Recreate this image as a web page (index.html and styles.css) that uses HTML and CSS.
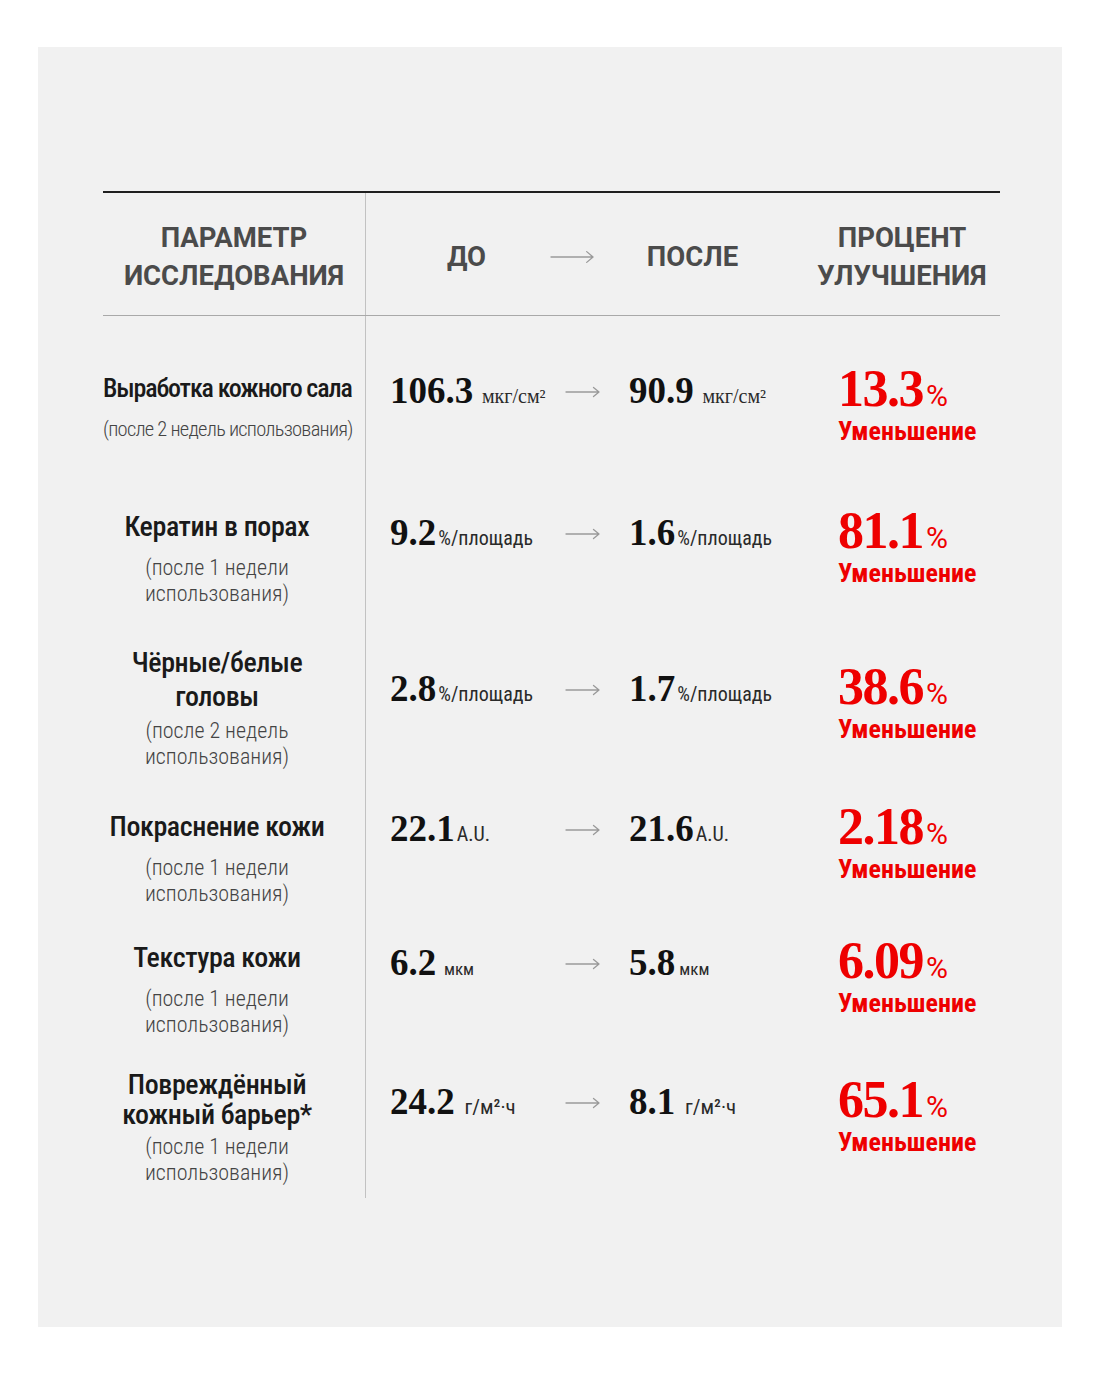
FILE: index.html
```html
<!DOCTYPE html>
<html lang="ru">
<head>
<meta charset="utf-8">
<title>Результаты исследования</title>
<link rel="stylesheet" href="styles.css">
</head>
<body>
<div class="panel">
  <div class="table">
    <div class="head">
      <div class="h h-param">ПАРАМЕТР<br>ИССЛЕДОВАНИЯ</div>
      <div class="h h-before">ДО</div>
      <div class="h h-arrow"><svg class="arrow-lg" viewBox="0 0 46 14" width="46" height="14"><path d="M1 7H44M37.5 1.5L44 7L37.5 12.5" /></svg></div>
      <div class="h h-after">ПОСЛЕ</div>
      <div class="h h-pct">ПРОЦЕНТ<br>УЛУЧШЕНИЯ</div>
    </div>

    <div class="row r1">
      <div class="param"><div class="title">Выработка кожного сала</div><div class="sub">(после 2 недель использования)</div></div>
      <div class="val"><span class="num">106.3</span> <span class="unit serif">мкг/см²</span></div>
      <div class="arr"><svg class="arrow" viewBox="0 0 36 12" width="36" height="12"><path d="M1 6H34M28.5 1.5L34 6L28.5 10.5" /></svg></div>
      <div class="val after"><span class="num">90.9</span> <span class="unit serif">мкг/см²</span></div>
      <div class="pct"><div class="pnum">13.3<span class="psign">%</span></div><div class="plabel">Уменьшение</div></div>
    </div>

    <div class="row r2">
      <div class="param"><div class="title">Кератин в порах</div><div class="sub">(после 1 недели<br>использования)</div></div>
      <div class="val"><span class="num">9.2</span><span class="unit">%/площадь</span></div>
      <div class="arr"><svg class="arrow" viewBox="0 0 36 12" width="36" height="12"><path d="M1 6H34M28.5 1.5L34 6L28.5 10.5" /></svg></div>
      <div class="val after"><span class="num">1.6</span><span class="unit">%/площадь</span></div>
      <div class="pct"><div class="pnum">81.1<span class="psign">%</span></div><div class="plabel">Уменьшение</div></div>
    </div>

    <div class="row r3">
      <div class="param"><div class="title">Чёрные/белые<br>головы</div><div class="sub">(после 2 недель<br>использования)</div></div>
      <div class="val"><span class="num">2.8</span><span class="unit">%/площадь</span></div>
      <div class="arr"><svg class="arrow" viewBox="0 0 36 12" width="36" height="12"><path d="M1 6H34M28.5 1.5L34 6L28.5 10.5" /></svg></div>
      <div class="val after"><span class="num">1.7</span><span class="unit">%/площадь</span></div>
      <div class="pct"><div class="pnum">38.6<span class="psign">%</span></div><div class="plabel">Уменьшение</div></div>
    </div>

    <div class="row r4">
      <div class="param"><div class="title">Покраснение кожи</div><div class="sub">(после 1 недели<br>использования)</div></div>
      <div class="val"><span class="num">22.1</span><span class="unit">A.U.</span></div>
      <div class="arr"><svg class="arrow" viewBox="0 0 36 12" width="36" height="12"><path d="M1 6H34M28.5 1.5L34 6L28.5 10.5" /></svg></div>
      <div class="val after"><span class="num">21.6</span><span class="unit">A.U.</span></div>
      <div class="pct"><div class="pnum">2.18<span class="psign">%</span></div><div class="plabel">Уменьшение</div></div>
    </div>

    <div class="row r5">
      <div class="param"><div class="title">Текстура кожи</div><div class="sub">(после 1 недели<br>использования)</div></div>
      <div class="val"><span class="num">6.2</span> <span class="unit small">мкм</span></div>
      <div class="arr"><svg class="arrow" viewBox="0 0 36 12" width="36" height="12"><path d="M1 6H34M28.5 1.5L34 6L28.5 10.5" /></svg></div>
      <div class="val after"><span class="num">5.8</span><span class="unit small">мкм</span></div>
      <div class="pct"><div class="pnum">6.09<span class="psign">%</span></div><div class="plabel">Уменьшение</div></div>
    </div>

    <div class="row r6">
      <div class="param"><div class="title">Повреждённый<br>кожный барьер*</div><div class="sub">(после 1 недели<br>использования)</div></div>
      <div class="val"><span class="num">24.2</span> <span class="unit wide">г/м²·ч</span></div>
      <div class="arr"><svg class="arrow" viewBox="0 0 36 12" width="36" height="12"><path d="M1 6H34M28.5 1.5L34 6L28.5 10.5" /></svg></div>
      <div class="val after"><span class="num">8.1</span> <span class="unit wide">г/м²·ч</span></div>
      <div class="pct"><div class="pnum">65.1<span class="psign">%</span></div><div class="plabel">Уменьшение</div></div>
    </div>
  </div>
</div>
</body>
</html>
```

FILE: styles.css
```css
* { box-sizing: border-box; }

html, body {
  margin: 0;
  padding: 0;
  background: #ffffff;
}

body {
  font-family: "Liberation Sans Narrow", "Roboto Condensed", "DejaVu Sans Condensed", sans-serif;
  color: #1b1b1b;
}

.panel {
  margin: 47px 0 0 38px;
  width: 1024px;
  height: 1280px;
  padding: 144px 0 0 65px;
  background: #f1f1f1;
}

.table {
  width: 897px;
  border-top: 2px solid #1f1f1f;
  background-image: linear-gradient(#c2c2c2, #c2c2c2);
  background-size: 1px 100%;
  background-position: 262px 0;
  background-repeat: no-repeat;
}

/* ---------- header ---------- */
.head {
  display: grid;
  grid-template-columns: 262px 185px 45px 195px 210px;
  align-items: center;
  height: 123px;
  border-bottom: 1px solid #a9a9a9;
  padding-top: 6px;
}

.h {
  font-family: "Roboto", "Liberation Sans", sans-serif;
  font-weight: 700;
  font-size: 27.5px;
  line-height: 38px;
  color: #4b4b4b;
  text-align: center;
}

.h-before { padding-left: 18px; }
.h-pct { padding-left: 14px; }
.h-arrow { display: flex; align-items: center; }

.arrow-lg, .arrow {
  display: block;
  fill: none;
  stroke: #9a9a9a;
  stroke-width: 1.3;
  stroke-linecap: round;
  stroke-linejoin: round;
}

/* ---------- rows ---------- */
.row {
  display: grid;
  grid-template-columns: 262px 200px 64px 209px 162px;
  align-items: start;
  --off: 0px;
}

.r1 { padding-top: 55px; padding-bottom: 64px; --off: 1px; }
.r2 { padding-bottom: 39px; --off: 4px; }
.r3 { padding-bottom: 40px; --off: 24px; }
.r4 { padding-bottom: 34px; --off: 0px; }
.r5 { padding-bottom: 32px; --off: 3px; }
.r6 { padding-bottom: 12px; --off: 13px; }

.param {
  padding-right: 34px;
  text-align: center;
  white-space: nowrap;
}

.title {
  font-size: 28px;
  line-height: 34px;
  font-weight: 500;
  letter-spacing: -0.4px;
  color: #1a1a1a;
}

.sub {
  margin-top: 4px;
  font-size: 22px;
  line-height: 26px;
  font-weight: 300;
  color: #444444;
}

.r1 .title {
  font-size: 26px;
  letter-spacing: -1.15px;
}

.r1 .sub {
  font-size: 20.5px;
  letter-spacing: -0.75px;
}

.r1 .sub, .r2 .sub, .r4 .sub, .r5 .sub { margin-top: 11px; }
.r6 .title { line-height: 30px; }

.val {
  padding-left: 25px;
  padding-top: calc(var(--off) + 2px);
  line-height: 34px;
  white-space: nowrap;
}

.val.after { padding-left: 0; }

.num {
  font-family: "Liberation Serif", "Times New Roman", serif;
  font-weight: 700;
  font-size: 37px;
  color: #111111;
}

.unit {
  font-size: 20px;
  line-height: 0;
  color: #2a2a2a;
  margin-left: 2px;
}

.unit.serif {
  font-family: "Liberation Serif", "Times New Roman", serif;
  font-size: 20px;
  margin-left: 5px;
}

.unit.small { font-size: 17px; margin-left: 4px; }
.unit.wide { font-size: 21px; margin-left: 6px; }

.arr {
  padding-top: calc(var(--off) + 14px);
}

.pct {
  padding-top: var(--off);
  color: #ee0000;
  white-space: nowrap;
}

.pnum {
  font-family: "Liberation Serif", "Times New Roman", serif;
  font-weight: 700;
  font-size: 52px;
  line-height: 34px;
  letter-spacing: -1.5px;
}

.psign {
  font-family: "Roboto", "Liberation Sans", sans-serif;
  font-weight: 400;
  font-size: 30px;
  line-height: 0;
  letter-spacing: 0;
  margin-left: 3px;
}

.plabel {
  margin-top: 10px;
  font-size: 26px;
  line-height: 30px;
  font-weight: 700;
}
```
